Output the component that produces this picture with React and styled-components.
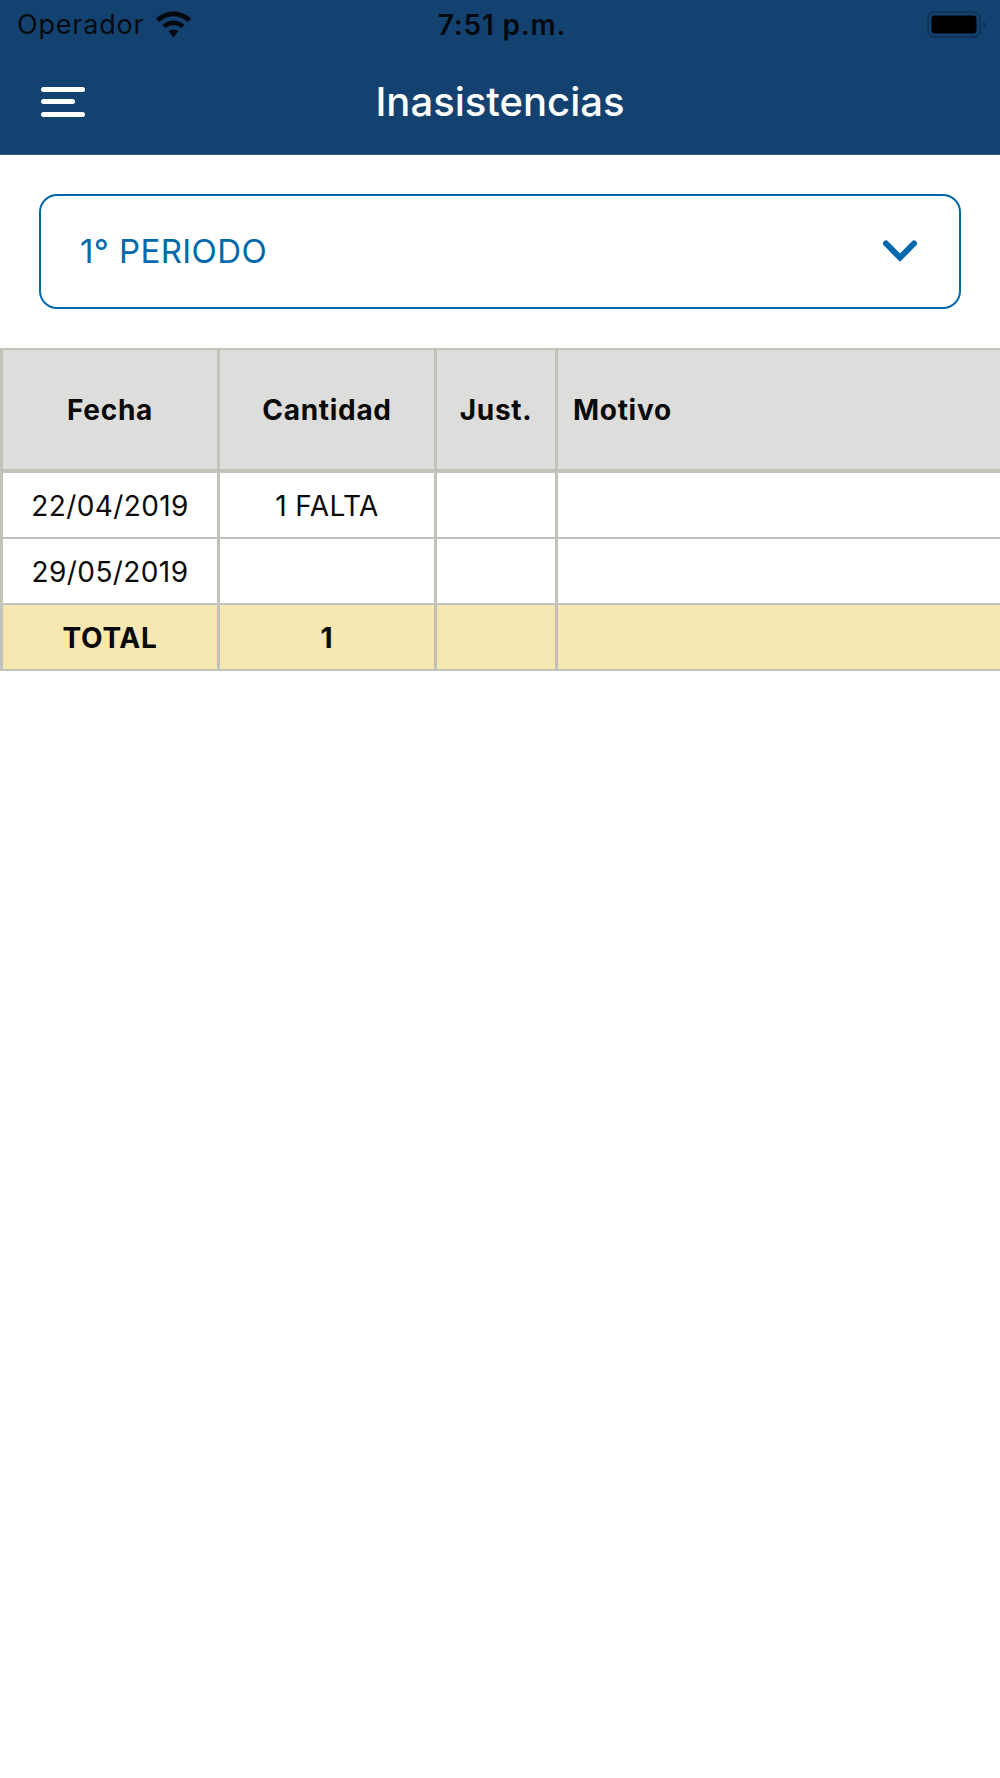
import styled, { createGlobalStyle } from "styled-components";

const GlobalStyle = createGlobalStyle`
  html, body {
    margin: 0;
    padding: 0;
    background: #fff;
    font-family: Inter, "Liberation Sans", sans-serif;
  }
  * {
    box-sizing: border-box;
  }
`;

const Page = styled.div`
  width: 1000px;
  height: 1778px;
  overflow: hidden;
  background: #fff;
`;

const Header = styled.header`
  height: 155px;
  background: #144270;
  border-bottom: 1px solid #2f5a86;
`;

const StatusBar = styled.div`
  height: 52px;
  padding: 0 13px 3px 17px;
  display: grid;
  grid-template-columns: 1fr auto 1fr;
  align-items: center;
  color: #050a10;
  font-size: 27px;
  letter-spacing: 0.8px;
`;

const Carrier = styled.div`
  display: flex;
  align-items: center;
  gap: 10px;
`;

const Clock = styled.div`
  font-size: 28px;
  font-weight: 600;
  letter-spacing: 0.8px;
`;

const BatteryWrap = styled.div`
  display: flex;
  justify-content: flex-end;
`;

const NavBar = styled.nav`
  height: 102px;
  padding: 0 41px;
  display: grid;
  grid-template-columns: 1fr auto 1fr;
  align-items: center;
`;

const Burger = styled.div`
  width: 44px;
  display: flex;
  flex-direction: column;
  gap: 7.5px;
  margin-bottom: 3px;
`;

const BurgerLine = styled.span`
  display: block;
  width: ${(p) => p.$width}px;
  height: 5px;
  border-radius: 3px;
  background: #fff;
`;

const Title = styled.h1`
  margin: 0 0 4px;
  color: #fff;
  font-size: 40px;
  font-weight: 500;
  letter-spacing: 0;
`;

const SelectWrap = styled.div`
  padding: 39px 39px 39px;
`;

const Select = styled.div`
  height: 115px;
  padding: 0 42px 2px 39px;
  display: flex;
  align-items: center;
  justify-content: space-between;
  border: 2px solid #0068ad;
  border-radius: 18px;
  color: #0068ad;
  font-size: 33px;
  letter-spacing: 0.4px;
`;

const Table = styled.div`
  border-top: 2px solid #c2c1ba;
`;

const Row = styled.div`
  display: grid;
  grid-template-columns: 220px 217px 121px 1fr;
  background: ${(p) => p.$bg || "#fff"};
  border-bottom: ${(p) => p.$line || 2}px solid #c2c1ba;
`;

const Cell = styled.div`
  height: ${(p) => p.$height || 64}px;
  padding: ${(p) => (p.$left ? "0 15px" : "1px 0 0")};
  display: flex;
  align-items: center;
  justify-content: ${(p) => (p.$left ? "flex-start" : "center")};
  border-right: 3px solid #c2c1ba;
  color: #0a0a0a;
  font-size: 28px;
  font-weight: ${(p) => (p.$bold ? 700 : 400)};
  letter-spacing: ${(p) => (p.$bold ? 0.7 : 0.4)}px;

  &:first-child {
    border-left: 3px solid #c2c1ba;
  }
  &:last-child {
    border-right: 0;
  }
`;

const WifiIcon = () => (
  <svg width="37" height="28" viewBox="0 0 37 28">
    <path
      d="M18.5 0.5C11.6 0.5 5.4 3.2 0.8 7.6L4 11C7.8 7.4 12.9 5.2 18.5 5.2S29.2 7.4 33 11L36.2 7.6C31.6 3.2 25.4 0.5 18.5 0.5Z"
      fill="#050a10"
    />
    <path
      d="M18.5 9.5C14.2 9.5 10.3 11.2 7.4 13.9L10.6 17.3C12.7 15.4 15.5 14.2 18.5 14.2S24.3 15.4 26.4 17.3L29.6 13.9C26.7 11.2 22.8 9.5 18.5 9.5Z"
      fill="#050a10"
    />
    <path
      d="M18.5 18.4C16.6 18.4 14.9 19.1 13.6 20.3L18.5 26.5L23.4 20.3C22.1 19.1 20.4 18.4 18.5 18.4Z"
      fill="#050a10"
    />
  </svg>
);

const BatteryIcon = () => (
  <svg width="60" height="28" viewBox="0 0 60 28">
    <rect x="1" y="1" width="52" height="25" rx="6" fill="none" stroke="#0f3459" strokeWidth="2" />
    <rect x="4.5" y="4.5" width="45" height="18" rx="3" fill="#000" />
    <path d="M56 10.5C58 11 59 12 59 13.5S58 16 56 16.5Z" fill="#0f3459" />
  </svg>
);

const ChevronIcon = () => (
  <svg width="34" height="22" viewBox="0 0 34 22">
    <path
      d="M3 3.5L17 17.5L31 3.5"
      fill="none"
      stroke="#0068ad"
      strokeWidth="6"
      strokeLinecap="round"
      strokeLinejoin="miter"
    />
  </svg>
);

const rows = [
  { fecha: "22/04/2019", cantidad: "1 FALTA" },
  { fecha: "29/05/2019", cantidad: "" },
];

export default function App() {
  return (
    <Page>
      <GlobalStyle />
      <Header>
        <StatusBar>
          <Carrier>
            Operador
            <WifiIcon />
          </Carrier>
          <Clock>7:51 p.m.</Clock>
          <BatteryWrap>
            <BatteryIcon />
          </BatteryWrap>
        </StatusBar>
        <NavBar>
          <Burger>
            <BurgerLine $width={44} />
            <BurgerLine $width={34} />
            <BurgerLine $width={44} />
          </Burger>
          <Title>Inasistencias</Title>
        </NavBar>
      </Header>

      <SelectWrap>
        <Select>
          1° PERIODO
          <ChevronIcon />
        </Select>
      </SelectWrap>

      <Table>
        <Row $bg="#dddddb" $line={4}>
          <Cell $height={119} $bold>Fecha</Cell>
          <Cell $height={119} $bold>Cantidad</Cell>
          <Cell $height={119} $bold>Just.</Cell>
          <Cell $height={119} $bold $left>Motivo</Cell>
        </Row>
        {rows.map((row) => (
          <Row key={row.fecha}>
            <Cell>{row.fecha}</Cell>
            <Cell>{row.cantidad}</Cell>
            <Cell />
            <Cell />
          </Row>
        ))}
        <Row $bg="#f7e7b1">
          <Cell $bold>TOTAL</Cell>
          <Cell $bold>1</Cell>
          <Cell />
          <Cell />
        </Row>
      </Table>
    </Page>
  );
}
